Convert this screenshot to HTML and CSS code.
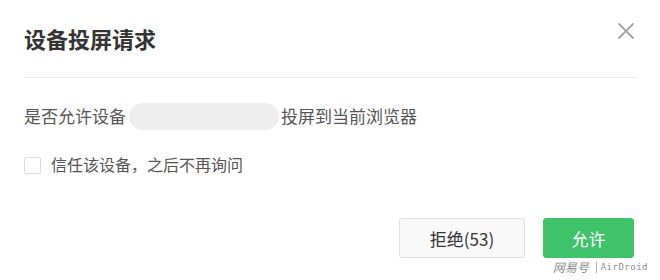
FILE: index.html
```html
<!DOCTYPE html>
<html lang="zh-CN">
<head>
<meta charset="utf-8">
<title>设备投屏请求</title>
<link rel="stylesheet" href="styles.css">
</head>
<body>
<div class="dialog">
  <div class="header">
    <div class="title">设备投屏请求</div>
    <button class="close" aria-label="关闭">
      <svg width="16" height="16" viewBox="0 0 16 16"><path d="M1 1 L15 15 M15 1 L1 15" stroke="#a3a3a3" stroke-width="1.8" stroke-linecap="round" fill="none"/></svg>
    </button>
  </div>
  <div class="message">
    <span>是否允许设备</span><span class="device"></span><span>投屏到当前浏览器</span>
  </div>
  <label class="trust">
    <span class="checkbox"></span>
    <span>信任该设备，之后不再询问</span>
  </label>
  <div class="footer">
    <button class="btn btn-reject">拒绝(53)</button>
    <button class="btn btn-allow">允许</button>
  </div>
  <div class="watermark"><span class="wm-cn">网易号</span><span class="wm-sep"></span><span class="wm-en">AirDroid</span></div>
</div>
</body>
</html>
```

FILE: styles.css
```css
html, body {
  margin: 0;
  padding: 0;
  background: #ffffff;
}
body {
  font-family: "Noto Sans CJK SC", "Noto Sans", sans-serif;
}
.dialog {
  position: relative;
  width: 660px;
  height: 280px;
  box-sizing: border-box;
  padding: 0 23px 0 24px;
}
.header {
  display: flex;
  justify-content: space-between;
  align-items: flex-start;
  padding-top: 23px;
  padding-bottom: 24px;
  border-bottom: 1px solid #ebebeb;
}
.title {
  font-size: 22px;
  line-height: 30px;
  font-weight: 700;
  color: #333333;
}
.close {
  border: 0;
  background: none;
  padding: 0;
  margin: 0 3px 0 0;
  width: 16px;
  height: 16px;
  display: block;
}
.close svg {
  display: block;
}
.message {
  display: flex;
  align-items: center;
  margin-top: 24px;
  font-size: 17px;
  line-height: 28px;
  color: #555555;
}
.device {
  display: inline-block;
  width: 150px;
  height: 27px;
  margin: 0 2px 0 3px;
  border-radius: 14px;
  background: #eeeeee;
}
.trust {
  display: flex;
  align-items: flex-start;
  margin-top: 23px;
  font-size: 16px;
  line-height: 22px;
  color: #555555;
}
.checkbox {
  width: 15px;
  height: 15px;
  margin: 4px 10px 0 0;
  border: 1px solid #dcdcdc;
  border-radius: 2px;
  background: #ffffff;
  flex: none;
}
.footer {
  display: flex;
  justify-content: flex-end;
  gap: 18px;
  margin-top: 43px;
  padding-right: 3px;
}
.btn {
  height: 40px;
  border-radius: 3px;
  font-family: "Noto Sans CJK SC", "Noto Sans", sans-serif;
  font-size: 17px;
  padding: 0;
}
.btn-reject {
  width: 126px;
  background: #f8f8f8;
  border: 1px solid #dedede;
  color: #333333;
}
.btn-allow {
  width: 91px;
  background: #3ec36b;
  border: 1px solid #3ec36b;
  color: #ffffff;
}
.watermark {
  position: absolute;
  right: 12px;
  bottom: 6px;
  display: flex;
  align-items: center;
  color: #8c8c8c;
  text-shadow: 0 0 1px #ffffff;
}
.wm-cn {
  font-size: 12px;
  line-height: 14px;
  font-style: italic;
}
.wm-sep {
  width: 1px;
  height: 11px;
  background: #b0b0b0;
  margin: 0 4px 0 7px;
}
.wm-en {
  font-family: "DejaVu Sans Mono", monospace;
  font-size: 9px;
  letter-spacing: 0.5px;
  line-height: 14px;
}
```
